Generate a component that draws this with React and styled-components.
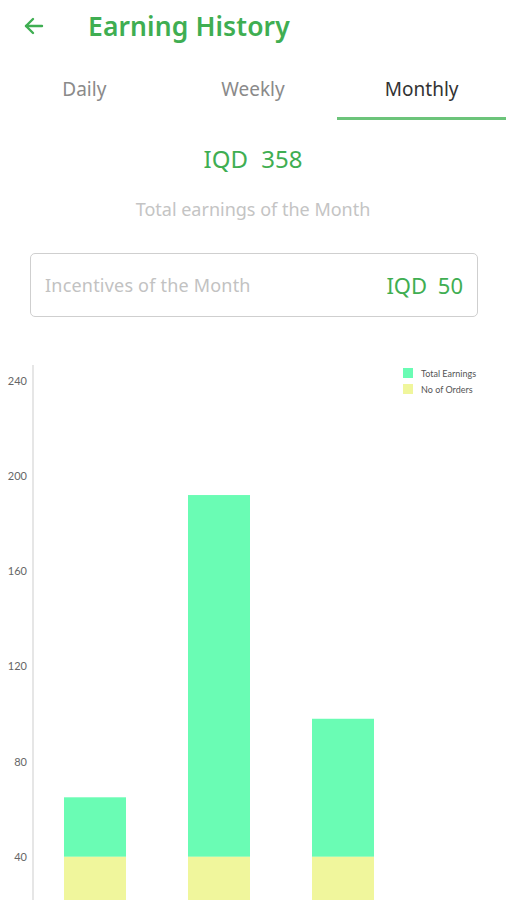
import React, { useState } from 'react';
import styled, { createGlobalStyle } from 'styled-components';

const GREEN = '#3fae52';

const GlobalStyle = createGlobalStyle`
  html, body {
    margin: 0;
    padding: 0;
    background: #fff;
    overflow: hidden;
  }
  body {
    font-family: "Noto Sans", "Open Sans", sans-serif;
  }
`;

const Screen = styled.div`
  width: 506px;
  height: 900px;
  display: flex;
  flex-direction: column;
  overflow: hidden;

  & > * {
    flex-shrink: 0;
  }
`;

const Header = styled.div`
  height: 52px;
  display: flex;
  align-items: center;
  padding-left: 22px;
  gap: 42px;
`;

const BackButton = styled.button`
  border: none;
  background: none;
  padding: 0;
  display: flex;
  color: ${GREEN};
`;

const Title = styled.div`
  font-size: 26.5px;
  font-weight: 600;
  color: ${GREEN};
  letter-spacing: 0.1px;
`;

const Tabs = styled.div`
  display: grid;
  grid-template-columns: repeat(3, 1fr);
  height: 68px;
`;

const Tab = styled.div`
  display: flex;
  align-items: center;
  justify-content: center;
  font-size: 19px;
  color: ${(p) => (p.$active ? '#333' : '#8a8a8a')};
  border-bottom: 3px solid ${(p) => (p.$active ? '#6cc47a' : 'transparent')};
  padding-top: 8px;
  cursor: pointer;
`;

const Summary = styled.div`
  display: flex;
  flex-direction: column;
  align-items: center;
`;

const Amount = styled.div`
  margin-top: 22px;
  font-size: 24px;
  color: ${GREEN};
  word-spacing: 7px;
`;

const Caption = styled.div`
  margin-top: 22px;
  font-size: 18px;
  color: #c4c4c4;
`;

const IncentiveBox = styled.div`
  margin: 32px 28px 0 30px;
  height: 62px;
  border: 1.5px solid #cfcfcf;
  border-radius: 5px;
  display: flex;
  align-items: center;
  justify-content: space-between;
  padding: 0 14px 0 14px;
`;

const IncentiveLabel = styled.div`
  font-size: 18px;
  color: #c2c2c2;
  letter-spacing: 0.2px;
`;

const IncentiveValue = styled.div`
  font-size: 22px;
  color: ${GREEN};
  word-spacing: 5px;
`;

const ChartWrap = styled.div`
  margin-top: 38px;
  flex: 1 1 auto;
  flex-shrink: 1 !important;
  min-height: 0;
  overflow: hidden;

  svg {
    display: block;
  }
`;

const ticks = [240, 200, 160, 120, 80, 40];
const bars = [
  { x: 64, earnings: 65, orders: 40 },
  { x: 188, earnings: 192, orders: 40 },
  { x: 312, earnings: 98, orders: 40 },
];

// chart coordinates are relative to ChartWrap top (y=355 on screen)
const top0 = 355;
const yFor = (v) => 952 - v * (95.2 / 40) - top0;

const BarChart = () => (
  <svg width="506" height="545" viewBox="0 0 506 545">
    <line x1="33" y1="10" x2="33" y2="545" stroke="#e6e6e6" strokeWidth="2" />
    {ticks.map((t) => (
      <text
        key={t}
        x="27"
        y={yFor(t) + 4}
        textAnchor="end"
        fontSize="11"
        fill="#666"
        fontFamily="Lato, sans-serif"
      >
        {t}
      </text>
    ))}
    {bars.map((b) => (
      <g key={b.x}>
        <rect x={b.x} y={yFor(b.earnings)} width="62" height={yFor(b.orders) - yFor(b.earnings)} fill="#6afcb4" />
        <rect x={b.x} y={yFor(b.orders)} width="62" height="200" fill="#f0f69c" />
      </g>
    ))}
    <rect x="403" y="13" width="10" height="10" fill="#6afcb4" />
    <text x="421" y="21.5" fontSize="9" fill="#555" fontFamily="Lato, sans-serif">Total Earnings</text>
    <rect x="403" y="29" width="10" height="10" fill="#f0f69c" />
    <text x="421" y="37.5" fontSize="9" fill="#555" fontFamily="Lato, sans-serif">No of Orders</text>
  </svg>
);

const App = () => {
  const [tab, setTab] = useState('Monthly');
  return (
    <Screen>
      <GlobalStyle />
      <Header>
        <BackButton>
          <svg width="24" height="24" viewBox="0 0 24 24" fill="none" stroke="currentColor" strokeWidth="2.4" strokeLinecap="round" strokeLinejoin="round">
            <path d="M20 12H4" />
            <path d="M11 5l-7 7 7 7" />
          </svg>
        </BackButton>
        <Title>Earning History</Title>
      </Header>
      <Tabs>
        {['Daily', 'Weekly', 'Monthly'].map((t) => (
          <Tab key={t} $active={tab === t} onClick={() => setTab(t)}>
            {t}
          </Tab>
        ))}
      </Tabs>
      <Summary>
        <Amount>IQD 358</Amount>
        <Caption>Total earnings of the Month</Caption>
      </Summary>
      <IncentiveBox>
        <IncentiveLabel>Incentives of the Month</IncentiveLabel>
        <IncentiveValue>IQD 50</IncentiveValue>
      </IncentiveBox>
      <ChartWrap>
        <BarChart />
      </ChartWrap>
    </Screen>
  );
};

export default App;
